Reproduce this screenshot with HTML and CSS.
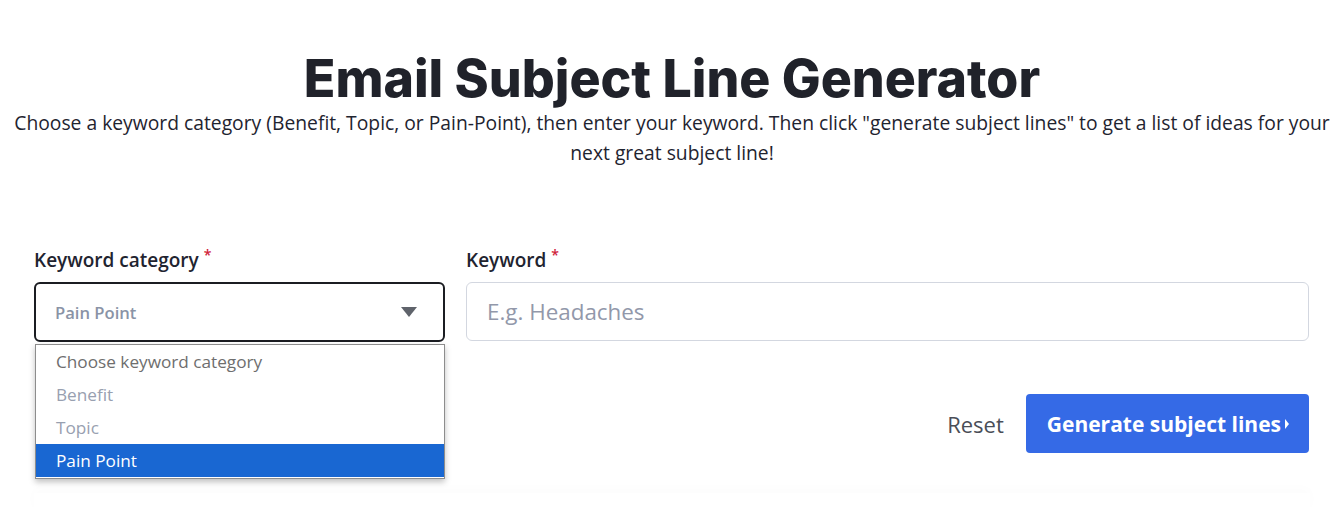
FILE: index.html
```html
<!DOCTYPE html>
<html lang="en">
<head>
    <meta charset="UTF-8">
    <meta name="viewport" content="width=device-width, initial-scale=1.0">
    <title>Email Subject Line Generator</title>
    <link rel="stylesheet" href="styles.css">
</head>
<body>
    <!-- page header -->
    <div class="header">
        <h1>Email Subject Line Generator</h1>
        <p class="intro">Choose a keyword category (Benefit, Topic, or Pain-Point), then enter your keyword. Then click "generate subject lines" to get a list of ideas for your next great subject line!</p>
    </div>

    <!-- generator form -->
    <form class="generator">
        <div class="fields">
            <div class="field">
                <label>Keyword category <span class="req">*</span></label>
                <div class="select-wrap">
                    <div class="select-box">
                        <span>Pain Point</span>
                        <span class="arrow"></span>
                    </div>
                    <ul class="options">
                        <li class="opt-first">Choose keyword category</li>
                        <li>Benefit</li>
                        <li>Topic</li>
                        <li class="selected">Pain Point</li>
                    </ul>
                </div>
            </div>
            <div class="field">
                <label for="keyword">Keyword <span class="req">*</span></label>
                <input type="text" id="keyword" placeholder="E.g. Headaches">
            </div>
        </div>
        <div class="actions">
            <button type="button" class="reset">Reset</button>
            <button type="submit" class="generate">Generate subject lines<span class="caret"></span></button>
        </div>
    </form>
    <div class="results"></div>
</body>
</html>
```

FILE: styles.css
```css
/* page */
body {
    margin: 0;
    min-height: 507px;
    font-family: "Open Sans", Arial, sans-serif;
    background: #fff;
    color: #1f2430;
}

/* header */
.header {
    padding: 48px 8px 0;
    text-align: center;
}

h1 {
    margin: 0;
    font-family: Inter, sans-serif;
    font-weight: 800;
    font-size: 51.8px;
    line-height: 60px;
    color: #20222a;
}

.intro {
    margin: 0;
    font-size: 19.3px;
    line-height: 30px;
    color: #1f2430;
}

/* form */
.generator {
    margin: 80px 35px 0 34px;
}

.fields {
    display: grid;
    grid-template-columns: 411fr 843fr;
    gap: 21px;
}

label {
    display: block;
    margin-bottom: 10px;
    font-size: 19px;
    font-weight: 600;
    line-height: 24px;
    color: #1f2430;
}

.req {
    color: #d0213a;
    font-size: 14px;
    vertical-align: top;
    line-height: 14px;
}

.select-wrap {
    position: relative;
}

.select-box {
    height: 60px;
    box-sizing: border-box;
    border: 2px solid #1b1d22;
    border-radius: 6px;
    display: flex;
    align-items: center;
    justify-content: space-between;
    padding: 0 26px 0 19px;
    font-size: 16.6px;
    font-weight: 600;
    color: #8a93a6;
}

.arrow {
    width: 0;
    height: 0;
    border-left: 8px solid transparent;
    border-right: 8px solid transparent;
    border-top: 10px solid #5f636b;
}

/* open dropdown list */
.options {
    position: absolute;
    top: 62px;
    left: 1px;
    right: 0;
    z-index: 2;
    margin: 0;
    padding: 0 0 1px;
    list-style: none;
    background: #fff;
    border: 1px solid #8d8d8d;
    box-shadow: 0 3px 6px rgba(0, 0, 0, 0.25);
    font-size: 17.2px;
    color: #98a0b0;
}

.options li {
    height: 33px;
    line-height: 33px;
    padding-left: 20px;
}

.options .opt-first {
    color: #6e6e6e;
}

.options .selected {
    background: #1967d2;
    color: #fff;
}

input {
    width: 100%;
    height: 59px;
    box-sizing: border-box;
    border: 1px solid #d3d7e0;
    border-radius: 6px;
    padding: 0 20px;
    font-family: inherit;
    font-size: 22.4px;
    color: #1f2430;
}

input::placeholder {
    color: #9298aa;
}

/* buttons */
.actions {
    display: flex;
    justify-content: flex-end;
    align-items: center;
    gap: 22px;
    margin-top: 52px;
}

.reset {
    border: none;
    background: none;
    font-family: inherit;
    font-size: 22px;
    color: #4a4e57;
    padding: 0;
    cursor: pointer;
}

.generate {
    height: 59px;
    padding: 0 20px 0 21px;
    border: none;
    border-radius: 4px;
    background: #356ae6;
    color: #fff;
    font-family: inherit;
    font-size: 21px;
    font-weight: 700;
    display: flex;
    align-items: center;
    gap: 4px;
    cursor: pointer;
}

.caret {
    width: 0;
    height: 0;
    border-top: 5px solid transparent;
    border-bottom: 5px solid transparent;
    border-left: 4px solid #fff;
}

/* empty results card, only its top shadow shows */
.results {
    margin: 40px 34px 0;
    height: 20px;
    box-shadow: 0 -4px 12px rgba(0, 0, 0, 0.015);
}
```
